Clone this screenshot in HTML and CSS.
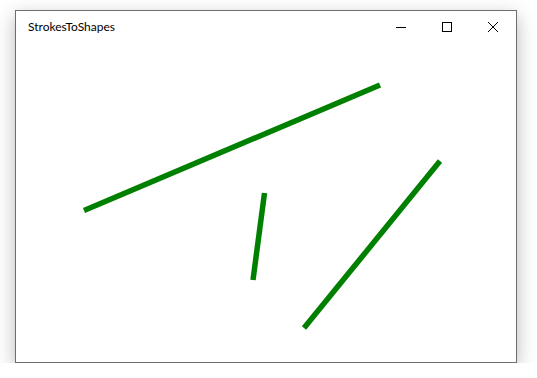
FILE: index.html
```html
<!DOCTYPE html>
<html lang="en">
<head>
    <meta charset="UTF-8">
    <title>StrokesToShapes</title>
    <link rel="stylesheet" href="styles.css">
</head>
<body>

    <!-- App window -->
    <div class="window">
        <div class="titlebar">
            <span class="title">StrokesToShapes</span>
            <div class="caption-buttons">
                <div class="caption-btn">
                    <svg width="10" height="10" viewBox="0 0 10 10"><path d="M0 5.5H10" stroke="#000" stroke-width="1"/></svg>
                </div>
                <div class="caption-btn">
                    <svg width="10" height="10" viewBox="0 0 10 10"><rect x="0.5" y="0.5" width="9" height="9" fill="none" stroke="#000" stroke-width="1"/></svg>
                </div>
                <div class="caption-btn">
                    <svg width="10" height="10" viewBox="0 0 10 10"><path d="M0 0L10 10M10 0L0 10" stroke="#000" stroke-width="1"/></svg>
                </div>
            </div>
        </div>

        <!-- Drawing surface, coordinates in page pixels -->
        <svg class="canvas" width="499" height="319" viewBox="16 42 499 319">
            <g stroke="#008000" stroke-width="5.5" stroke-linecap="butt">
                <line x1="84" y1="210.5" x2="380" y2="85"/>
                <line x1="264.5" y1="193" x2="253" y2="280"/>
                <line x1="440" y1="161" x2="304" y2="328"/>
            </g>
        </svg>
    </div>

</body>
</html>
```

FILE: styles.css
```css
/* Page */
body {
    margin: 0;
    background: #ffffff;
    font-family: 'Lato', 'Noto Sans', sans-serif;
}

/* Window frame */
.window {
    box-sizing: border-box;
    width: 502px;
    height: 353px;
    margin: 10px 0 0 15px;
    border: 1px solid #6e6e6e;
    background: #ffffff;
    box-shadow: 0 6px 18px rgba(0, 0, 0, 0.28);
    display: flex;
    flex-direction: column;
}

.titlebar {
    height: 31px;
    display: flex;
    align-items: center;
    justify-content: space-between;
    flex-shrink: 0;
}

.title {
    padding-left: 12px;
    font-size: 12px;
    color: #000000;
    line-height: 1;
}

.caption-buttons {
    display: flex;
    height: 100%;
}

.caption-btn {
    width: 46px;
    height: 100%;
    display: flex;
    align-items: center;
    justify-content: center;
}

.caption-btn svg {
    display: block;
}

.canvas {
    display: block;
}
```
